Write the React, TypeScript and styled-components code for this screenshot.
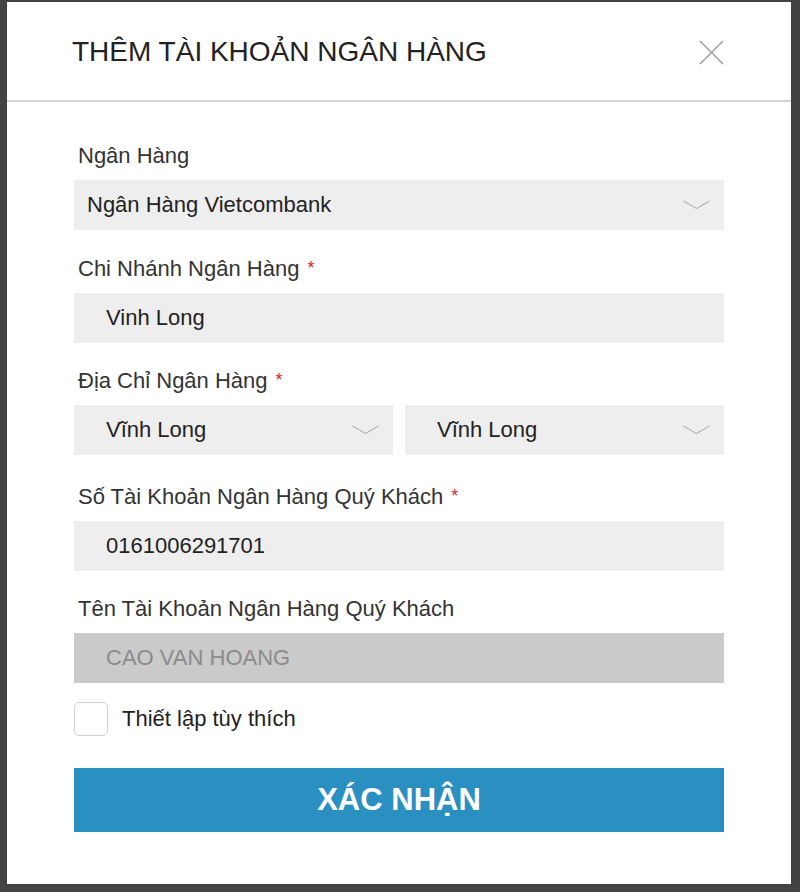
import styled, { createGlobalStyle } from 'styled-components';

const GlobalStyle = createGlobalStyle`
  html, body {
    margin: 0;
    padding: 0;
    background: #434343;
    font-family: "Liberation Sans", Arial, sans-serif;
  }
  * {
    box-sizing: border-box;
  }
`;

const Backdrop = styled.div`
  display: flex;
  padding: 2px 9px 8px 7px;
  min-height: 892px;
`;

const Modal = styled.div`
  width: 784px;
  height: 882px;
  background: #ffffff;
  display: flex;
  flex-direction: column;
`;

const Header = styled.div`
  height: 100px;
  display: flex;
  align-items: center;
  justify-content: space-between;
  padding: 2px 67px 0 65px;
  border-bottom: 2px solid #d3d3d3;
`;

const Title = styled.h2`
  margin: 0;
  font-size: 28px;
  font-weight: 400;
  color: #222;
`;

const CloseButton = styled.button`
  width: 25px;
  height: 25px;
  padding: 0;
  border: none;
  background: none;
  cursor: pointer;
  display: flex;
  align-items: center;
  justify-content: center;
`;

const Body = styled.div`
  padding: 40px 67px 0;
  display: flex;
  flex-direction: column;
`;

const Field = styled.div<{ $space?: number }>`
  display: flex;
  flex-direction: column;
  margin-bottom: ${(p) => p.$space ?? 24}px;
`;

const Label = styled.label`
  font-size: 22px;
  line-height: 28px;
  color: #333;
  padding-left: 4px;
  margin-bottom: 10px;
`;

const Required = styled.span`
  color: #d2262e;
  font-size: 18px;
  margin-left: 8px;
  vertical-align: 2px;
`;

const Row = styled.div`
  display: flex;
  gap: 12px;

  & > * {
    flex: 1;
  }
`;

const Box = styled.div<{ $pad?: number; $disabled?: boolean }>`
  height: 50px;
  display: flex;
  align-items: center;
  justify-content: space-between;
  padding: 0 14px 0 ${(p) => p.$pad ?? 32}px;
  background: ${(p) => (p.$disabled ? '#cacaca' : '#eeeeee')};
  color: ${(p) => (p.$disabled ? '#8b8b8b' : '#222')};
  font-size: 22px;
`;

const CheckRow = styled.div`
  display: flex;
  align-items: center;
  gap: 14px;
  margin-top: -5px;
`;

const CheckBox = styled.span`
  width: 34px;
  height: 34px;
  border: 1px solid #cfcfcf;
  border-radius: 5px;
  background: #fff;
`;

const CheckText = styled.span`
  font-size: 22px;
  color: #222;
`;

const Submit = styled.button`
  margin-top: 32px;
  height: 64px;
  border: none;
  background: #2a8fc1;
  color: #fff;
  font-family: "Liberation Sans", Arial, sans-serif;
  font-size: 31px;
  font-weight: 700;
  cursor: pointer;
`;

function Chevron() {
  return (
    <svg width="27" height="10" viewBox="0 0 27 10">
      <polyline points="0.5,1 13.5,8.5 26.5,1" fill="none" stroke="#a3a3a3" strokeWidth="1" />
    </svg>
  );
}

function Select({ value, pad }: { value: string; pad?: number }) {
  return (
    <Box $pad={pad}>
      <span>{value}</span>
      <Chevron />
    </Box>
  );
}

export default function App() {
  return (
    <>
      <GlobalStyle />
      <Backdrop>
        <Modal>
          <Header>
            <Title>THÊM TÀI KHOẢN NGÂN HÀNG</Title>
            <CloseButton aria-label="close">
              <svg width="25" height="25" viewBox="0 0 25 25">
                <path d="M1 1 L24 24 M24 1 L1 24" stroke="#9a9a9a" strokeWidth="1.4" fill="none" />
              </svg>
            </CloseButton>
          </Header>
          <Body>
            <Field>
              <Label>Ngân Hàng</Label>
              <Select value="Ngân Hàng Vietcombank" pad={13} />
            </Field>
            <Field $space={23}>
              <Label>
                Chi Nhánh Ngân Hàng<Required>*</Required>
              </Label>
              <Box>Vinh Long</Box>
            </Field>
            <Field $space={27}>
              <Label>
                Địa Chỉ Ngân Hàng<Required>*</Required>
              </Label>
              <Row>
                <Select value="Vĩnh Long" />
                <Select value="Vĩnh Long" />
              </Row>
            </Field>
            <Field>
              <Label>
                Số Tài Khoản Ngân Hàng Quý Khách<Required>*</Required>
              </Label>
              <Box>0161006291701</Box>
            </Field>
            <Field>
              <Label>Tên Tài Khoản Ngân Hàng Quý Khách</Label>
              <Box $disabled>CAO VAN HOANG</Box>
            </Field>
            <CheckRow>
              <CheckBox />
              <CheckText>Thiết lập tùy thích</CheckText>
            </CheckRow>
            <Submit>XÁC NHẬN</Submit>
          </Body>
        </Modal>
      </Backdrop>
    </>
  );
}
